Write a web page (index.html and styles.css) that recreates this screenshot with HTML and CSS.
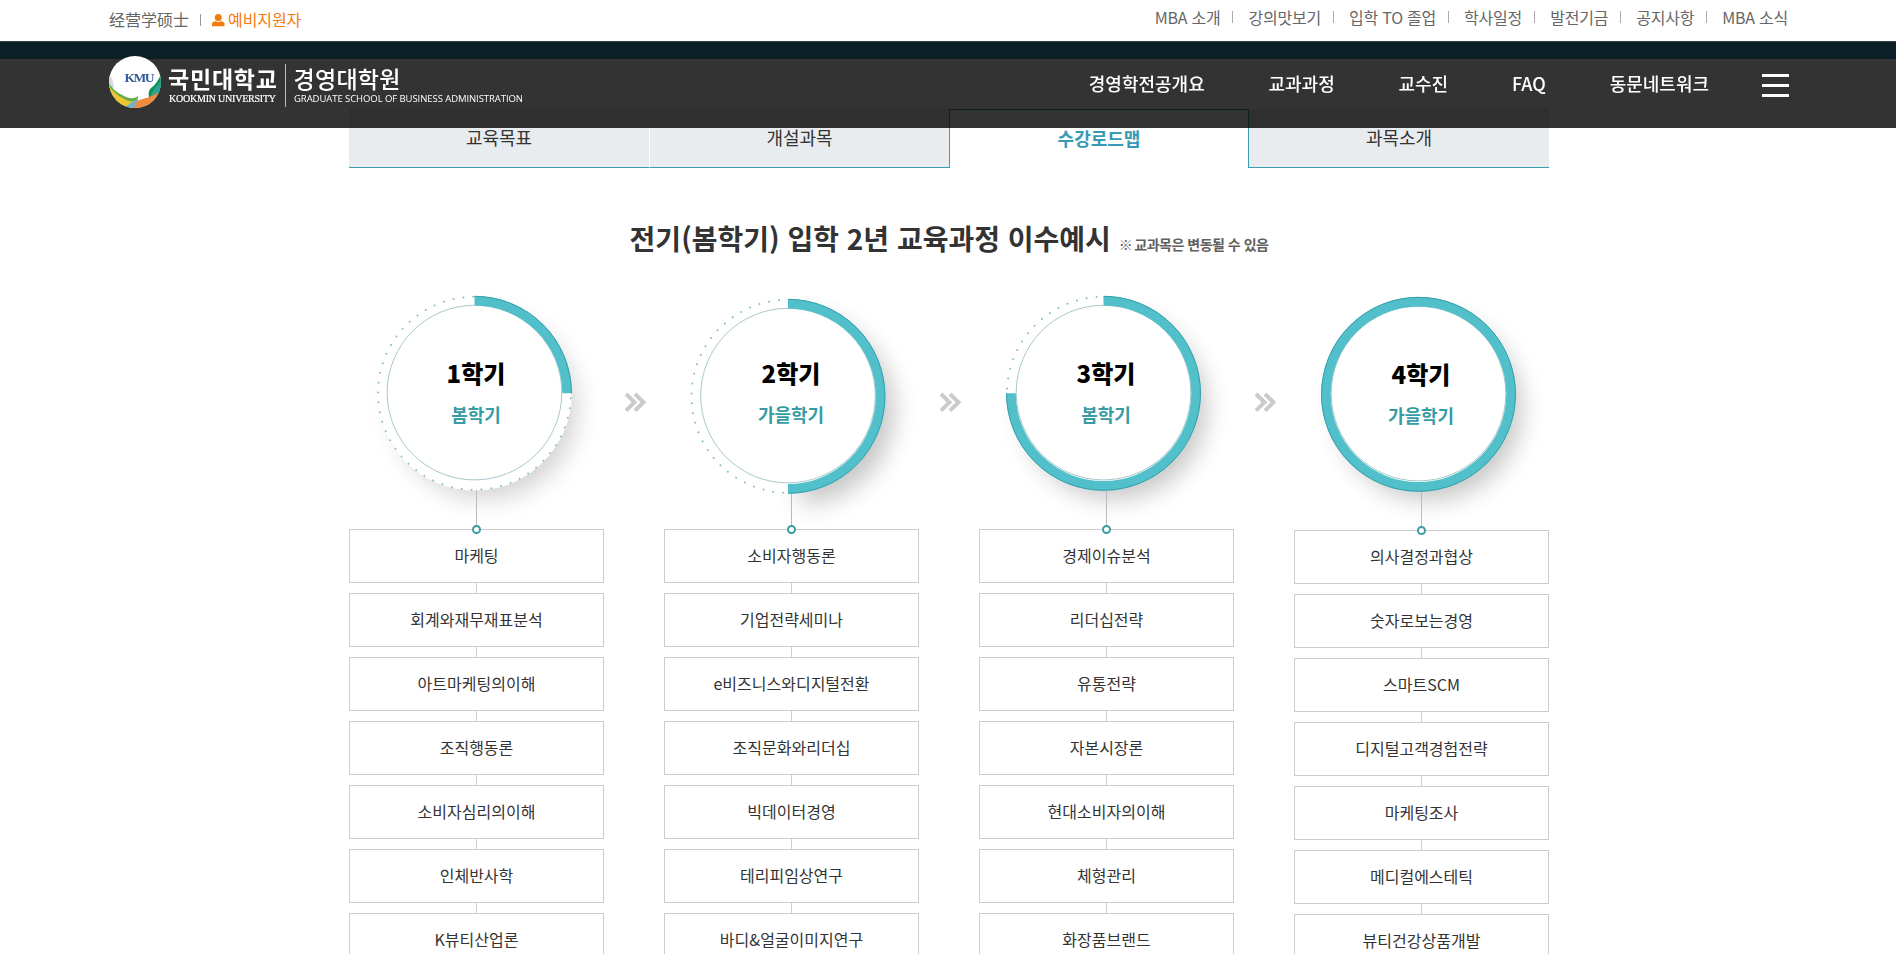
FILE: index.html
```html
<!DOCTYPE html>
<html lang="ko">
<head>
<meta charset="utf-8">
<title>경영대학원</title>
<link rel="stylesheet" href="styles.css">
</head>
<body>
<header class="header">
  <div class="topbar">
    <div class="top-left"><a class="zh" lang="zh-CN">经营学硕士</a><i class="sep"></i><a class="apply"><svg width="13" height="13" viewBox="0 0 13 13"><circle cx="6.3" cy="3.5" r="3.5"/><path d="M0 12.2V10C0 8.200 1.500 7.300 3.500 7.200C5 8.200 7.700 8.200 9 7.200C11 7.300 12.500 8.200 12.500 10V12.200Z"/></svg>예비지원자</a></div>
    <nav class="top-right"><a>MBA 소개</a><a>강의맛보기</a><a>입학 TO 졸업</a><a>학사일정</a><a>발전기금</a><a>공지사항</a><a>MBA 소식</a></nav>
  </div>
  <div class="gnb">
    <svg class="logo" width="420" height="56" viewBox="0 0 420 56">
      <defs><clipPath id="seal"><circle cx="26" cy="27" r="26"/></clipPath></defs>
      <circle cx="26" cy="27" r="26" fill="#fff"/>
      <g clip-path="url(#seal)">
        <path d="M0 18Q4 24 5 33L0 33Z" fill="#d9dadb"/>
        <path d="M0 28C4 35 9 38 15 41C21 44 25 44 29 41C29 46 26 50 20 50L8 54L0 40Z" fill="#63ad48"/>
        <path d="M0 31C5 38 10 41 15 44C20 47 24 47 28 45L22 54H8L0 42Z" fill="#f0c62e"/>
        <path d="M53 17C49 26 46 30 42 33C39 36 39 40 41 45L54 36Z" fill="#15945a"/>
        <path d="M53 24C48 32 43 35 41 45L54 36Z" fill="#2aa59a"/>
        <path d="M18 52C26 43 37 46 50 37L42 54H18Z" fill="#f08a3c"/>
        <path d="M13 52C19 52 22 46 30 44C26 48 26 51 25 54H16Z" fill="#6fb3cf"/>
      </g>
      <text class="kmu" x="15.500" y="26.500" textLength="30">KMU</text>
      <text class="l-ko b" x="59" y="33" textLength="109">국민대학교</text>
      <text class="l-en serif" x="60" y="47" textLength="107">KOOKMIN UNIVERSITY</text>
      <path d="M176.500 9V52" stroke="#bbb"/>
      <text class="l-ko" x="184.500" y="33" textLength="107">경영대학원</text>
      <text class="l-en" x="185" y="47" textLength="229">GRADUATE SCHOOL OF BUSINESS ADMINISTRATION</text>
    </svg>
    <nav class="menu"><a>경영학전공개요</a><a>교과과정</a><a>교수진</a><a>FAQ</a><a>동문네트워크</a><span class="burger"><i></i><i></i><i></i></span></nav>
  </div>
</header>
<div class="banner"></div>
<main class="content">
  <ul class="tabs"><li>교육목표</li><li>개설과목</li><li class="on">수강로드맵</li><li>과목소개</li></ul>
  <h2 class="title">전기(봄학기) 입학 2년 교육과정 이수예시<small><span>※</span>교과목은 변동될 수 있음</small></h2>
  <div class="roadmap" id="roadmap"></div>
</main>
<script src="app.js"></script>
</body>
</html>
```
FILE: styles.css
```css
*, *::before { box-sizing: border-box; }
body { margin: 0; height: 954px; overflow: hidden; background: #fff; color: #333; font-family: "Noto Sans CJK KR", "Noto Sans", sans-serif; font-size: 16px; }
ul, h2 { margin: 0; padding: 0; list-style: none; }
.header { position: fixed; top: 0; left: 0; width: 100%; z-index: 10; }
.topbar { height: 41px; background: #fff; padding: 0 108px; display: flex; justify-content: space-between; color: #666; line-height: 24px; }
.top-left { display: flex; align-items: center; padding-bottom: 3px; padding-left: 1px; }
.zh { font-family: "Noto Sans CJK SC", sans-serif; }
.sep { width: 1px; height: 12px; background: #999; margin: 2px 11px 0 11px; }
.apply { display: flex; align-items: center; gap: 3px; color: #f47b0a; letter-spacing: -.1px; }
.apply svg { fill: #f47b0a; margin-top: 2px; }
.top-right { display: flex; align-items: flex-start; padding-top: 5px; letter-spacing: -.22px; }
.top-right a { display: flex; align-items: center; }
.top-right a + a::before { content: ""; width: 1px; height: 12px; background: #aaa; margin: 0 15px 0 12px; }
.gnb { height: 87px; background: rgba(0, 0, 0, .8); border-top: 1px solid rgba(130, 130, 130, .35); padding: 13px 107px 0 109px; display: flex; justify-content: space-between; align-items: flex-start; }
.logo { display: block; overflow: visible; fill: #fff; }
.kmu { font: bold 13.500px "Liberation Serif", serif; fill: #34599a; }
.l-ko { font-size: 23px; font-weight: 500; }
.b { font-weight: 700; }
.l-en { font-family: "Open Sans", sans-serif; font-size: 9.500px; }
.serif { font-family: "Liberation Serif", serif; font-size: 10px; stroke: #fff; stroke-width: .2px; }
.menu { display: flex; gap: 63.750px; color: #fff; font-size: 18px; font-weight: 500; line-height: 26px; padding-top: 15px; }
.burger { display: flex; flex-direction: column; gap: 7px; width: 27px; padding-top: 4px; margin-left: -10.750px; }
.burger i { height: 3px; background: #fff; }
.banner { height: 59px; background: #37a0be; }
.content { width: 1200px; margin: 50px 0 0 349px; }
.tabs { display: grid; grid-template-columns: 301px 299px 300px 300px; height: 59px; }
.tabs li { background: #e8ecef; border-bottom: 1px solid #3a9fac; text-align: center; font-size: 18px; line-height: 56px; }
.tabs li:first-child { border-right: 1px solid #fff; }
.tabs .on { background: #fff; border: 1px solid #3a9fac; border-bottom: 0; color: #359ab3; font-weight: 700; }
.title { display: flex; align-items: baseline; justify-content: center; height: 112px; padding-top: 50px; font-size: 28px; line-height: 40px; font-weight: 700; }
.title small { font-size: 14px; letter-spacing: -.5px; color: #606060; margin-left: 8px; font-weight: 700; }
.title small span { font-weight: 400; margin-right: 2px; }
.roadmap { display: grid; grid-template-columns: repeat(4, 255px); gap: 60px; }
.term { position: relative; }
.term:last-child { padding-top: 1px; }
.dial { display: block; height: 249px; width: 255px; overflow: visible; }
.dial .name { font-size: 24px; font-weight: 900; fill: #000; text-anchor: middle; }
.dial .season { font-size: 18px; font-weight: 700; fill: #379ba5; text-anchor: middle; }
.courses { display: flex; flex-direction: column; gap: 10px; position: relative; }
.courses li { height: 54px; border: 1px solid #ccc; background: #fff; text-align: center; line-height: 51px; position: relative; }
.courses li + li::before { content: ""; position: absolute; left: 126px; top: -11px; width: 1px; height: 10px; background: #ccc; }
.courses::before { content: ""; position: absolute; z-index: 1; left: 122.500px; top: -4px; width: 9px; height: 9px; border: 2px solid #3a9da3; border-radius: 50%; background: #fff; }
.next { position: absolute; left: 274.500px; top: 112px; }
```
FILE: app.js
```js
const terms = [
  { name: '1학기', season: '봄학기', cx: 125.5, cy: 113.3, q: 1, list: ['마케팅', '회계와재무재표분석', '아트마케팅의이해', '조직행동론', '소비자심리의이해', '인체반사학', 'K뷰티산업론'] },
  { name: '2학기', season: '가을학기', cx: 124, cy: 116.3, q: 2, list: ['소비자행동론', '기업전략세미나', 'e비즈니스와디지털전환', '조직문화와리더십', '빅데이터경영', '테리피임상연구', '바디&amp;얼굴이미지연구'] },
  { name: '3학기', season: '봄학기', cx: 124.5, cy: 113.3, q: 3, list: ['경제이슈분석', '리더십전략', '유통전략', '자본시장론', '현대소비자의이해', '체형관리', '화장품브랜드'] },
  { name: '4학기', season: '가을학기', cx: 124.5, cy: 113.3, q: 4, list: ['의사결정과협상', '숫자로보는경영', '스마트SCM', '디지털고객경험전략', '마케팅조사', '메디컬에스테틱', '뷰티건강상품개발'] }
];

// Point on a circle of radius r, t quarter turns clockwise from the top.
function at(t, cx, cy, r) {
  const a = t * Math.PI / 2;
  return (cx + r * Math.sin(a)).toFixed(2) + ' ' + (cy - r * Math.cos(a)).toFixed(2);
}

function arc(from, to, cx, cy, r) {
  let d = 'M' + at(from, cx, cy, r);
  for (let t = from + 1; t <= to; t++) d += `A${r} ${r} 0 0 1 ${at(t, cx, cy, r)}`;
  return d;
}

document.getElementById('roadmap').innerHTML = terms.map((t, i) => {
  const { cx, cy, q } = t;
  const shade = q === 2
    ? `<path d="${arc(0, 2, cx + 12, cy + 14, 94)}Z" fill="#000" opacity=".22" filter="url(#blur${i})"/>`
    : `<circle cx="${cx + 11}" cy="${cy + 14}" r="92" fill="#000" opacity="${q === 1 ? .17 : .22}" filter="url(#blur${i})"/>`;
  return `<section class="term">
    <svg class="dial" viewBox="0 0 255 249">
      <filter id="blur${i}" x="-30%" y="-30%" width="160%" height="160%"><feGaussianBlur stdDeviation="12"/></filter>
      ${shade}
      <circle cx="${cx}" cy="${cy}" r="97.300" fill="#fff"/>
      <path d="M127.500 ${cy + 97}V249" stroke="#bbb"/>
      ${q < 4 ? `<path d="${arc(q, 4, cx, cy, 96.5)}" fill="none" stroke="#84bdc2" stroke-width="2" stroke-linecap="round" stroke-dasharray="0 9.950" stroke-dashoffset="-5"/>` : ''}
      <circle cx="${cx}" cy="${cy - .7}" r="87.300" fill="none" stroke="#a9c9cc"/>
      <path d="${arc(0, q, cx, cy, 92.5)}" fill="none" stroke="#52c0ca" stroke-width="9.500"/>
      <path d="${arc(0, q, cx, cy, 97)}" fill="none" stroke="#329fa8" stroke-width="1"/>
      <text class="name" x="127" y="103">${t.name}</text>
      <text class="season" x="127" y="142">${t.season}</text>
    </svg>
    ${i < 3 ? '<svg class="next" width="23" height="21" viewBox="0 0 23 21"><path d="M2 2L10.500 10.300L2 18.600M11 2L19.500 10.300L11 18.600" fill="none" stroke="#cbcbcb" stroke-width="4"/></svg>' : ''}
    <ul class="courses">${t.list.map(c => `<li>${c}</li>`).join('')}</ul>
  </section>`;
}).join('');
```
